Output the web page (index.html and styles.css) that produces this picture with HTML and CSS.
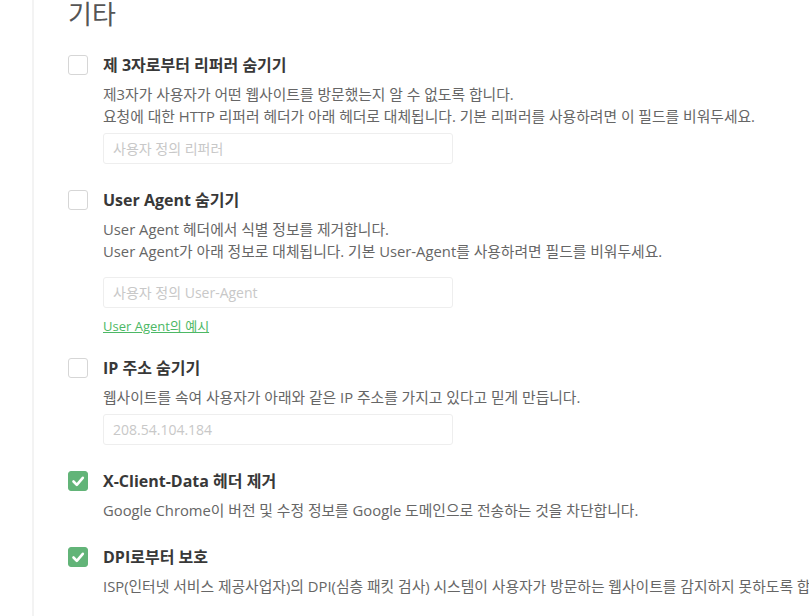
FILE: index.html
```html
<!DOCTYPE html>
<html lang="ko">

<head>
    <meta charset="UTF-8">
    <meta name="viewport" content="width=device-width, initial-scale=1.0">
    <title>기타 설정</title>
    <link rel="stylesheet" href="styles.css">
</head>

<body>
    <div class="container">
        <h2 class="section-title">기타</h2>

        <div class="option">
            <span class="checkbox"></span>
            <div class="option-body">
                <h3 class="option-title">제 3자로부터 리퍼러 숨기기</h3>
                <p class="option-desc">제3자가 사용자가 어떤 웹사이트를 방문했는지 알 수 없도록 합니다.</p>
                <p class="option-desc">요청에 대한 HTTP 리퍼러 헤더가 아래 헤더로 대체됩니다. 기본 리퍼러를 사용하려면 이 필드를 비워두세요.</p>
                <input type="text" class="text-input" placeholder="사용자 정의 리퍼러">
            </div>
        </div>

        <div class="option option-link">
            <span class="checkbox"></span>
            <div class="option-body">
                <h3 class="option-title">User Agent 숨기기</h3>
                <p class="option-desc">User Agent 헤더에서 식별 정보를 제거합니다.</p>
                <p class="option-desc">User Agent가 아래 정보로 대체됩니다. 기본 User-Agent를 사용하려면 필드를 비워두세요.</p>
                <input type="text" class="text-input input-wide" placeholder="사용자 정의 User-Agent">
                <a href="#" class="example-link">User Agent의 예시</a>
            </div>
        </div>

        <div class="option">
            <span class="checkbox"></span>
            <div class="option-body">
                <h3 class="option-title">IP 주소 숨기기</h3>
                <p class="option-desc">웹사이트를 속여 사용자가 아래와 같은 IP 주소를 가지고 있다고 믿게 만듭니다.</p>
                <input type="text" class="text-input" placeholder="208.54.104.184">
            </div>
        </div>

        <div class="option">
            <span class="checkbox checked">
                <svg viewBox="0 0 20 20" width="20" height="20"><polyline points="5.5,10.5 8.8,13.8 14.8,6.8" fill="none" stroke="#fff" stroke-width="2.6" stroke-linecap="round" stroke-linejoin="round"/></svg>
            </span>
            <div class="option-body">
                <h3 class="option-title">X-Client-Data 헤더 제거</h3>
                <p class="option-desc">Google Chrome이 버전 및 수정 정보를 Google 도메인으로 전송하는 것을 차단합니다.</p>
            </div>
        </div>

        <div class="option">
            <span class="checkbox checked">
                <svg viewBox="0 0 20 20" width="20" height="20"><polyline points="5.5,10.5 8.8,13.8 14.8,6.8" fill="none" stroke="#fff" stroke-width="2.6" stroke-linecap="round" stroke-linejoin="round"/></svg>
            </span>
            <div class="option-body">
                <h3 class="option-title">DPI로부터 보호</h3>
                <p class="option-desc">ISP(인터넷 서비스 제공사업자)의 DPI(심층 패킷 검사) 시스템이 사용자가 방문하는 웹사이트를 감지하지 못하도록 합니다.</p>
            </div>
        </div>
    </div>
</body>

</html>
```

FILE: styles.css
```css
* {
    padding: 0;
    margin: 0;
    box-sizing: border-box;
}

html,
body {
    height: 100%;
    overflow: hidden;
}

body {
    background-color: #fff;
    font-family: "Open Sans", "Noto Sans CJK KR", sans-serif;
    color: #666;
}

.container {
    margin-left: 32px;
    border-left: 2px solid #f3f3f3;
    padding-left: 34px;
    min-height: 100%;
    width: 1200px;
}

.section-title {
    font-size: 26px;
    font-weight: 400;
    line-height: 28px;
    color: #555;
    margin-bottom: 26px;
}

.option {
    display: flex;
    gap: 15px;
    margin-bottom: 25px;
}

.option-link {
    margin-bottom: 20px;
}

.checkbox {
    flex: none;
    width: 20px;
    height: 20px;
    margin-top: 1px;
    border: 1px solid #d6d6d6;
    border-radius: 3px;
    background-color: #fff;
}

.checkbox.checked {
    border-color: #62b478;
    background-color: #62b478;
}

.checkbox svg {
    display: block;
    margin: -1px;
}

.option-title {
    font-size: 16px;
    font-weight: 700;
    line-height: 22px;
    color: #383838;
    margin-bottom: 7px;
}

.option-desc {
    font-size: 14.8px;
    line-height: 22px;
    white-space: nowrap;
}

.text-input {
    display: block;
    width: 350px;
    height: 31px;
    margin-top: 6px;
    padding: 0 9px;
    border: 1px solid #eee;
    border-radius: 3px;
    font-family: inherit;
    font-size: 14px;
    color: #555;
    outline: none;
}

.text-input::placeholder {
    color: #c8c8c8;
}

.input-wide {
    margin-top: 15px;
}

.example-link {
    display: inline-block;
    margin-top: 7px;
    font-size: 13px;
    line-height: 22px;
    color: #4cb865;
}
```
